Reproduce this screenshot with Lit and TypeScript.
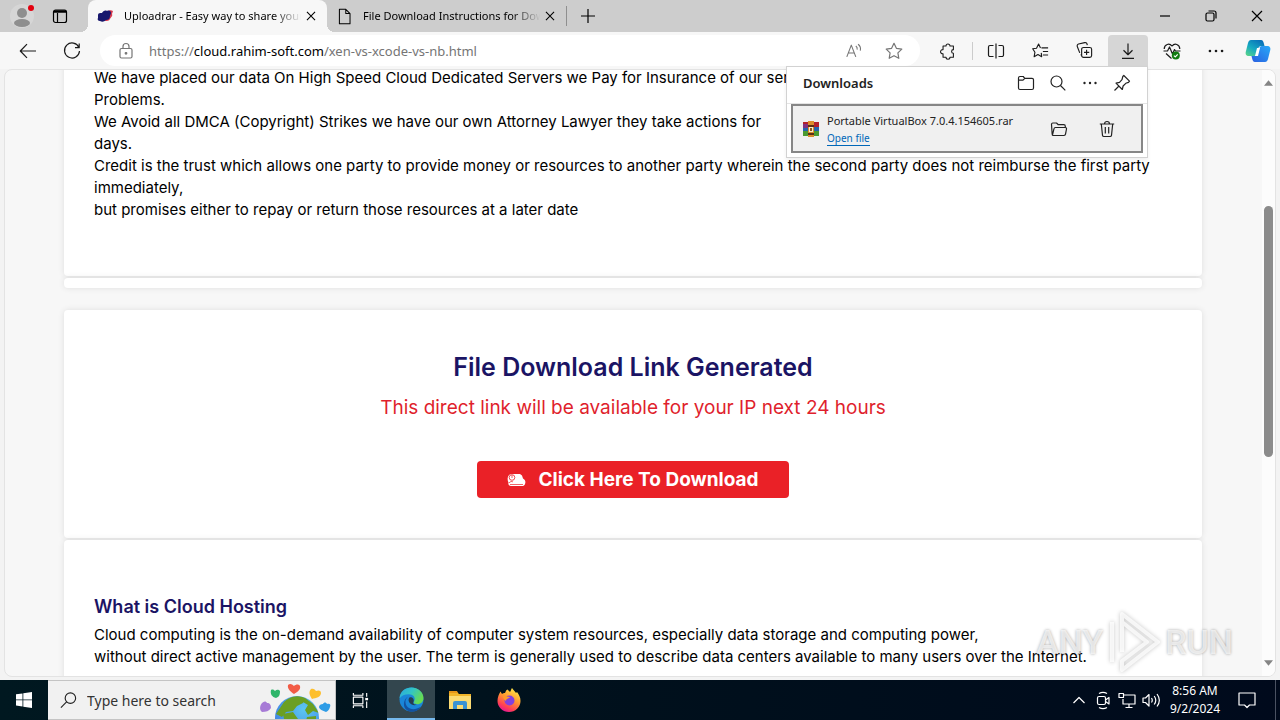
import { LitElement, html, css, svg } from "lit";
import { customElement } from "lit/decorators.js";
import { classMap } from "lit/directives/class-map.js";

/* Line icons, drawn on a 20 x 20 grid. */
const glyphs: Record<string, unknown> = {
  workspace: svg`<rect x="3.5" y="4" width="13" height="12.5" rx="2"/><path d="M4 5.500h12" stroke-width="2.500"/><path d="M7.5 7v9"/>`,
  page: svg`<path d="M4 1.500h7.500l5 5v12H4z M11.500 1.500v5h5"/>`,
  close: svg`<path d="M5.500 5.500l9 9M14.500 5.500l-9 9"/>`,
  plus: svg`<path d="M10 3v14M3 10h14"/>`,
  minimize: svg`<path d="M5 10h10"/>`,
  restore: svg`<rect x="5" y="7" width="8" height="8" rx="1.500"/><path d="M7.500 5h5.500a2 2 0 0 1 2 2v5.500"/>`,
  exit: svg`<path d="M5 5l10 10M15 5L5 15"/>`,
  back: svg`<path d="M18 10H2.500M9 3.200L2.300 10 9 16.800"/>`,
  reload: svg`<path d="M16.900 6.500A7.500 7.500 0 1 0 17.500 10M17.200 2.500v4.200h-4.200"/>`,
  lock: svg`<rect x="4" y="7.500" width="12" height="9.500" rx="1.500"/><path d="M7 7.500V5.500a3 3 0 0 1 6 0v2"/><circle cx="10" cy="12.300" r=".8" fill="currentColor"/>`,
  read: svg`<path d="M2 16.500L7 3.500l5 13M3.800 12.200h6.400M12 4.500c1.500 1 1.800 2.500 1.500 4M14.500 2.500c2.500 1.800 3.200 4 2.500 7"/>`,
  star: svg`<path d="M10 2.300l2.400 5 5.400.8-3.900 3.800.9 5.400-4.800-2.600-4.800 2.600.9-5.400L2.200 8.100l5.400-.8z"/>`,
  puzzle: svg`<path d="M4.500 4.500h3.300a2.200 2.200 0 1 1 4.400 0H16v4a2 2 0 1 0 0 4V17h-3.800a2.200 2.200 0 0 1-4.400 0H4.500v-4a2.300 2.300 0 1 1 0-4.500z"/>`,
  split: svg`<path d="M7.500 4.500H4a1.500 1.500 0 0 0-1.500 1.500v8A1.500 1.500 0 0 0 4 15.500h3.500M12.500 4.500H16A1.500 1.500 0 0 1 17.500 6v8a1.500 1.500 0 0 1-1.500 1.500h-3.500M10 2.500v15"/>`,
  favorites: svg`<path d="M11 7.300h7M12.500 11h5.500M12.500 14.700h5.500M10.800 12.500l.4 4-3.900-2.200-4 2.300.8-4.700L1.800 8.200l4-.6L8 3.200l2 4.100"/>`,
  collections: svg`<rect x="7" y="6.800" width="10.500" height="10.500" rx="2"/><path d="M12.200 9.300v5.500M9.500 12h5.500M5 12.500L2.400 5.800a2 2 0 0 1 1.300-2.600l6.500-1.500a2 2 0 0 1 2.400 1.500l.4 1.200M7 15l-1-.8"/>`,
  download: svg`<path d="M10 2.500v11M5.500 9.300l4.500 4.400 4.500-4.400M4 17.300h12"/>`,
  health: svg`<path d="M10 5.200C7.500 1.800 2.300 3 2.200 8M10 5.200C12.500 1.800 17.700 3 17.800 8M1.500 10h4l2-4 3 7 2-4.500 1 1.500h5M4 12.500l5.500 5"/><circle cx="13.800" cy="14.500" r="4" fill="#107c10" stroke="none"/><path d="M11.900 14.600l1.400 1.300 2.400-2.500" stroke="#fff"/>`,
  more: svg`<g fill="currentColor" stroke="none"><circle cx="4.500" cy="10" r="1.200"/><circle cx="10" cy="10" r="1.200"/><circle cx="15.500" cy="10" r="1.200"/></g>`,
  folder: svg`<path d="M2.500 5A1.500 1.500 0 0 1 4 3.500H7.200l1.600 1.800H16A1.500 1.500 0 0 1 17.500 6.800v8.200A1.500 1.500 0 0 1 16 16.500H4A1.500 1.500 0 0 1 2.500 15zM2.500 7.200h4.500l1.800-1.900"/>`,
  search: svg`<circle cx="8.500" cy="8.500" r="5.500"/><path d="M12.500 12.500l4.800 4.800"/>`,
  pin: svg`<path d="M11.800 2.500l5.700 5.700-1 1.200-2.700.9-2.700 2.700-.8 3.500L4 10.200l3.500-.9 2.500-2.600.8-3.200zM7 13l-4.500 4.500"/>`,
  openFolder: svg`<path d="M3.200 15.500L2.500 5.200A1.300 1.300 0 0 1 3.800 4H7.500l1.800 1.700h5.500a1.500 1.500 0 0 1 1.500 1.500V8.500M3.500 15.800L5 9.700A1.500 1.500 0 0 1 6.500 8.500h9.800A1.300 1.300 0 0 1 17.500 10l-1 5.200a1.500 1.500 0 0 1-1.500 1.300H4.200a1 1 0 0 1-1-.9"/>`,
  trash: svg`<path d="M2.800 5h14.400M7.500 5a2.500 2.500 0 0 1 5 0M4.300 5l1.200 11.300A1.500 1.500 0 0 0 7 17.500h6a1.500 1.500 0 0 0 1.500-1.200L15.700 5M8.300 8v6.500M11.700 8v6.500"/>`,
  find: svg`<circle cx="12" cy="7.500" r="5.500"/><path d="M8 11.500L2 17.500"/>`,
  taskview: svg`<path d="M2.500 2v2.500h10V2M2.500 18v-2.500h10V18M2.500 6.500h10v7h-10zM16.500 2v4M16.500 11v7"/><path d="M15 8.500h3" stroke-width="2.500"/>`,
  chevron: svg`<path d="M4.500 13L10 7.500l5.500 5.500"/>`,
  meet: svg`<rect x="4.500" y="6.500" width="8" height="8" rx="1.500"/><path d="M12.500 10l3.500-2.500v6.500l-3.500-2.500M6 3.500c2.500-1.500 5.500-1.500 8 0M6 17.500c2.500 1.500 5.500 1.500 8 0"/>`,
  network: svg`<path d="M7 5h11v9H6V9M12 14v3.500M8.500 17.500h7"/><rect x="2" y="3.500" width="4.500" height="4"/>`,
  sound: svg`<path d="M2 8v4.500h2.500L8 16V4.500L4.500 8zM10.500 8c1 1.500 1 3 0 4.500M13.200 6c2 2.700 2 5.800 0 8.500M16 4c3 4 3 8.500 0 12.500"/>`,
  notice: svg`<path d="M2 3h16v12h-5.500L10 17.500 7.500 15H2z"/>`,
};

const icon = (name: string, size = 20) => html`<svg class="icon" width=${size} height=${size} viewBox="0 0 20 20" aria-hidden="true">${glyphs[name]}</svg>`;

const shared = css`
  * { box-sizing: border-box; }
  button { font: inherit; color: inherit; background: none; border: 0; padding: 0; display: flex; align-items: center; justify-content: center; flex: none; }
  .icon { fill: none; stroke: currentColor; stroke-width: 1.2; display: block; flex: none; stroke-linejoin: round; }
  svg { display: block; flex: none; }
`;

@customElement("tab-strip")
class TabStrip extends LitElement {
  static styles = [shared, css`
    :host { display: flex; height: 32px; background: #cdcdcd; color: #000; }
    .profile { width: 44px; }
    .space { width: 32px; }
    .tabs { display: flex; margin-left: 12px; }
    .tab { display: flex; align-items: center; width: 239px; padding: 0 6px 0 9px; position: relative; }
    .tab.active { background: #f7f7f7; border-radius: 8px 8px 0 0; }
    .tab.active::before, .tab.active::after { content: ""; position: absolute; bottom: 0; width: 8px; height: 8px; }
    .tab.active::before { left: -8px; background: radial-gradient(circle at 0 0, #cdcdcd 8px, #f7f7f7 8px); }
    .tab.active::after { right: -8px; background: radial-gradient(circle at 100% 0, #cdcdcd 8px, #f7f7f7 8px); }
    .title { flex: 1; min-width: 0; margin-left: 10px; overflow: hidden; white-space: nowrap; font-size: 11px; line-height: 20px;
      -webkit-mask-image: linear-gradient(to right, #000 84%, transparent); mask-image: linear-gradient(to right, #000 84%, transparent); }
    .x { width: 20px; height: 20px; }
    .bar { width: 1px; height: 20px; background: #8f8f8f; align-self: center; }
    .add { width: 42px; }
    .controls { display: flex; margin-left: auto; }
    .controls button { width: 46px; }
  `];
  render() {
    return html`
      <button class="profile" aria-label="Profile"><svg width="28" height="28" viewBox="0 0 28 28">
        <circle cx="14" cy="14" r="12" fill="#d6d6d6"/><circle cx="14" cy="11" r="5" fill="#8e8e8e"/><ellipse cx="14" cy="21" rx="8" ry="4" fill="#8e8e8e"/>
        <circle cx="23" cy="6" r="3" fill="#e3000f"/></svg></button>
      <button class="space" aria-label="Workspaces">${icon("workspace", 20)}</button>
      <div class="tabs">
        ${[["Uploadrar - Easy way to share your files", true], ["File Download Instructions for Download", false]].map(([title, active]) => html`
          <div class=${classMap({ tab: true, active: !!active })}>
            ${active ? html`<svg width="17" height="16" viewBox="0 0 17 16"><path d="M10 4c2-2 4-2 6-1l-1 3c1 2-1 3-2 5-1 2-3 2-5 2z" fill="#d83a4e"/><path d="M1 7c0-2 2-2 4-2 1-2 3-3 5-2 2-1 4 0 4 2 0 1-1 2-1 3 0 3-2 4-4 4-2 2-4 2-6 1-2 0-3-2-2-3z" fill="#17176d"/></svg>` : icon("page", 17)}
            <span class="title">${title}</span>
            <button class="x" aria-label="Close tab">${icon("close", 18)}</button>
          </div>`)}
      </div>
      <span class="bar"></span>
      <button class="add" aria-label="New tab">${icon("plus", 20)}</button>
      <div class="controls">
        <button aria-label="Minimize">${icon("minimize")}</button>
        <button aria-label="Restore">${icon("restore")}</button>
        <button aria-label="Close">${icon("exit")}</button>
      </div>`;
  }
}

@customElement("downloads-panel")
class DownloadsPanel extends LitElement {
  static styles = [shared, css`
    :host { display: block; width: 362px; background: #fff; border: 1px solid #d2d2d2; padding-bottom: 4px; color: #222; box-shadow: 0 2px 4px #0001; }
    header { display: flex; align-items: center; height: 37px; padding: 0 9px 4px 16px; border-bottom: 1px solid #e4e4e4; }
    h2 { margin: 0 auto 0 0; font-size: 13px; font-weight: 600; }
    header button { width: 32px; height: 32px; }
    .item { display: flex; align-items: center; margin: 0 4px; height: 49px; border: 2px solid #868686; background: #f0f0f0; padding: 0 10px; }
    .info { flex: 1; margin-left: 8px; display: flex; flex-direction: column; align-items: flex-start; }
    .name { font-size: 11px; line-height: 20px; white-space: nowrap; }
    a { font-size: 10px; line-height: 14px; color: #0067b8; text-decoration: none; border-bottom: 1px solid #0067b8; }
    .item button { width: 48px; height: 40px; }
  `];
  render() {
    return html`
      <header><h2>Downloads</h2>
        <button aria-label="Open downloads folder">${icon("folder", 20)}</button>
        <button aria-label="Search downloads">${icon("search", 20)}</button>
        <button aria-label="More options">${icon("more", 20)}</button>
        <button aria-label="Pin downloads">${icon("pin", 20)}</button>
      </header>
      <div class="item">
        <svg width="16" height="16" viewBox="0 0 16 16"><path fill="#b3202c" d="M0 1h16v5H0z"/><path fill="#2463ac" d="M0 6h16v5H0z"/><path fill="#4b9a30" d="M0 10h16v5H0z"/><path fill="#82317e" d="M0 3h5v4H0z"/><path fill="#dc8d2c" d="M5 0h6v16H5z"/><path fill="#5c2f14" d="M5 4h6v2H5zM5 12h6v2H5z"/><path fill="#f8edc9" d="M6 6h4v5H6z"/><path fill="#915a1b" d="M7 7h2v3H7z"/></svg>
        <div class="info"><span class="name">Portable VirtualBox 7.0.4.154605.rar</span><a href="#open">Open file</a></div>
        <button aria-label="Show in folder">${icon("openFolder", 20)}</button>
        <button aria-label="Delete file">${icon("trash", 20)}</button>
      </div>`;
  }
}

@customElement("tool-bar")
class ToolBar extends LitElement {
  static styles = [shared, css`
    :host { display: flex; align-items: center; height: 37px; padding: 0 2px 0 6px; background: #f7f7f7; color: #1b1b1b; }
    button { width: 40px; height: 31px; margin: 0 2px; border-radius: 4px 4px 0 0; }
    .address { flex: 1; min-width: 0; height: 31px; margin: 0 6px; padding: 0 6px 0 16px; border-radius: 16px; background: #fff; display: flex; align-items: center; color: #757575; }
    .url { flex: 1; min-width: 0; margin-left: 13px; font-size: 13px; line-height: 20px; white-space: nowrap; overflow: hidden; }
    .url b { font-weight: 400; color: #000; }
    .address button { width: 36px; }
    .bar { width: 1px; height: 18px; margin: 0 1px 0 2px; background: #ccc; }
    .anchor { position: relative; z-index: 2; }
    .anchor > button { background: #d6d6d6; }
    .copilot { width: 36px; }
    downloads-panel { position: absolute; top: 100%; right: 2px; }
  `];
  render() {
    return html`
      <button aria-label="Back">${icon("back", 20)}</button>
      <button aria-label="Reload">${icon("reload", 20)}</button>
      <div class="address">${icon("lock", 20)}
        <span class="url">https://<b>cloud.rahim-soft.com</b>/xen-vs-xcode-vs-nb.html</span>
        <button aria-label="Read aloud">${icon("read", 18)}</button>
        <button aria-label="Add to favorites">${icon("star", 20)}</button>
      </div>
      <button aria-label="Extensions">${icon("puzzle", 18)}</button>
      <span class="bar"></span>
      <button aria-label="Split screen">${icon("split", 20)}</button>
      <button aria-label="Favorites">${icon("favorites", 19)}</button>
      <button aria-label="Collections">${icon("collections", 19)}</button>
      <div class="anchor"><button aria-label="Downloads">${icon("download", 20)}</button><downloads-panel></downloads-panel></div>
      <button aria-label="Browser essentials">${icon("health", 20)}</button>
      <button aria-label="Settings and more">${icon("more", 22)}</button>
      <button class="copilot" aria-label="Copilot"><svg width="26" height="24" viewBox="0 0 26 24">
        <defs><linearGradient id="a" x1="0" y1="1" x2=".7" y2="0"><stop offset="0" stop-color="#5fd884"/><stop offset=".5" stop-color="#16a9c2"/><stop offset="1" stop-color="#0972b9"/></linearGradient>
        <linearGradient id="b" x1="0" y1="1" x2="1" y2="0"><stop offset="0" stop-color="#2a5fe0"/><stop offset="1" stop-color="#28a9f8"/></linearGradient></defs>
        <path d="M6 1h10c2 0 2.500 2 3 4l.5 2h-3c-2 0-3 1-3.500 3l-1.500 5c-.5 1.500-1.500 2-3 2H4c-3 0-4-2-3-5l2-8c.5-2 1.500-3 3-3z" fill="url(#a)"/>
        <path d="M20 23H10c-2 0-2.500-2-3-4l-.5-2h3c2 0 3-1 3.500-3l1.500-5c.5-1.500 1.500-2 3-2H22c3 0 4 2 3 5l-2 8c-.5 2-1.500 3-3 3z" fill="url(#b)"/>
        <path d="M12 9h3l-2 8h-3z" fill="#fff"/>
      </svg></button>`;
  }
}

@customElement("web-page")
class WebPage extends LitElement {
  static styles = [shared, css`
    :host { display: flex; min-height: 0; margin: 0 4px 3px; border: 1px solid #e3e3e3; border-radius: 8px; background: #f7f7f7; overflow: hidden; font-family: Inter, "Noto Sans", sans-serif; }
    .scroller { flex: 1; min-width: 0; overflow: hidden; padding: 0 60px 0 59px; }
    .card { background: #fff; border-radius: 4px; box-shadow: 0 0 6px #0000001a; margin-bottom: 2px; padding: 55px 30px; font-size: 15px; line-height: 22px; color: #000; }
    .card.lead { padding-top: 20px; }
    .card.strip { padding: 5px; margin-bottom: 22px; }
    .card.link { padding: 41px 30px 40px; display: flex; flex-direction: column; align-items: center; }
    p { margin: 0; white-space: nowrap; }
    h1 { margin: 0 0 10px; font-size: 25px; line-height: 32px; font-weight: 600; color: #1b1464; }
    h2 { margin: 0 0 5px; font-size: 18px; line-height: 24px; font-weight: 600; color: #1b1464; }
    .note { font-size: 19px; line-height: 30px; margin-bottom: 38px; color: #df1f2d; }
    .go { height: 37px; padding: 0 30px; gap: 12px; border-radius: 4px; background: #ea2127; color: #fff; font-size: 19px; font-weight: 700; }
    .bar { width: 13px; flex: none; display: flex; flex-direction: column; align-items: center; background: #fcfcfc; padding: 10px 0; }
    .thumb { width: 9px; height: 251px; border-radius: 5px; background: #8b8b8b; margin: 120px 0 auto; }
  `];
  firstUpdated() {
    this.renderRoot.querySelector(".scroller")!.scrollTop = 23;
  }
  render() {
    const lead = [
      "We have placed our data On High Speed Cloud Dedicated Servers we Pay for Insurance of our servers",
      "Problems.",
      "We Avoid all DMCA (Copyright) Strikes we have our own Attorney Lawyer they take actions for",
      "days.",
      "Credit is the trust which allows one party to provide money or resources to another party wherein the second party does not reimburse the first party",
      "immediately,",
      "but promises either to repay or return those resources at a later date",
    ];
    return html`
      <main class="scroller">
        <section class="card lead">${lead.map((line) => html`<p>${line}</p>`)}</section>
        <div class="card strip"></div>
        <section class="card link">
          <h1>File Download Link Generated</h1>
          <p class="note">This direct link will be available for your IP next 24 hours</p>
          <button class="go"><svg width="19" height="14" viewBox="0 0 19 14"><path d="M5 1h8l2 1.500 1 3c2 1 3 3 2 5.500-.5 1.500-1.500 2-3 2H4c-2 0-3-1.500-2.500-3.500C0 7 0 1 5 1z" fill="#fff"/><circle cx="5" cy="4.500" r="2.800" fill="none" stroke="#ea2127" stroke-width=".8"/><path d="M5 2v3M2 10c1-1.500 3-2 4-1M3 11.500h13" fill="none" stroke="#ea2127" stroke-width=".7"/></svg>Click Here To Download</button>
        </section>
        <section class="card">
          <h2>What is Cloud Hosting</h2>
          <p>Cloud computing is the on-demand availability of computer system resources, especially data storage and computing power,</p>
          <p>without direct active management by the user. The term is generally used to describe data centers available to many users over the Internet.</p>
        </section>
      </main>
      <div class="bar">
        <svg width="9" height="6" viewBox="0 0 10 6"><path d="M0 6L5 0l5 6z" fill="#858585"/></svg>
        <span class="thumb"></span>
        <svg width="9" height="6" viewBox="0 0 10 6"><path d="M0 0l5 6 5-6z" fill="#858585"/></svg>
      </div>`;
  }
}

@customElement("task-bar")
class TaskBar extends LitElement {
  static styles = [shared, css`
    :host { display: flex; height: 40px; background: linear-gradient(90deg, #001820, #00101c 50%, #000a1c); color: #fff; }
    button { height: 40px; width: 48px; }
    .search { display: flex; width: 288px; height: 40px; background: #f1f1f1; border: 1px solid #c4c4c4; border-left-width: 0; color: #222; align-items: center; padding-left: 11px; }
    input { flex: 1; min-width: 0; margin-left: 9px; border: 0; padding: 0; background: none; font: inherit; font-size: 14px; outline: 0; }
    input::placeholder { color: #333; opacity: 1; }
    .art { align-self: flex-end; }
    .apps { display: flex; gap: 1px; margin-left: 3px; }
    .apps .on { background: #33464e; border-bottom: 2px solid #76b9ed; }
    .tray { display: flex; align-items: center; margin-left: auto; }
    .tray button { width: 24px; }
    .clock { width: 64px; text-align: center; font-size: 12px; line-height: 18px; }
    .tray .notice { width: 40px; }
    .desk { width: 5px; align-self: stretch; border-left: 1px solid #4a5262; margin-left: 8px; }
  `];
  render() {
    return html`
      <button aria-label="Start"><svg width="16" height="16" viewBox="0 0 16 16"><path fill="#fff" d="M0 2.300L6.500 1.400v6.100H0zM7.300 1.300L16 0v7.500H7.300zM0 8.300h6.500v6.200L0 13.600zM7.300 8.300H16V16l-8.700-1.300z"/></svg></button>
      <label class="search">${icon("find", 19)}<input type="text" placeholder="Type here to search" aria-label="Type here to search">
        <svg class="art" width="76" height="38" viewBox="0 0 76 38">
          <defs><radialGradient id="g" cx=".65" cy=".3" r=".8"><stop offset="0" stop-color="#5cc6f2"/><stop offset="1" stop-color="#3d7be0"/></radialGradient><clipPath id="c"><circle cx="38" cy="37" r="22"/></clipPath></defs>
          <circle cx="38" cy="37" r="22" fill="url(#g)"/>
          <g clip-path="url(#c)" fill="#6b9f22"><path d="M25 21c6-6 14-7 21-4l-2 5-6 3-4 5-7 1-4 5-6-3zM46 17l8 6 6 9-6-2-5 4-3-5 3-5-5-3zM24 33l10-2 5 7H25zM48 36l9-1v5H47z"/></g>
          <path d="M29 4c2-2 4-1 6 1 2-2 5-2 6 0 1 4-3 6-6 8-3-2-7-5-6-9z" fill="#f25b45"/>
          <path d="M12 9c2-1 3 0 4 1 2-2 4-1 5 0 0 4-1 6-4 7-4-1-6-4-5-8z" fill="#2fb56a"/>
          <path d="M52 8c3-1 4 1 5 2 2-1 5-1 5 2 0 4-5 5-9 6-2-3-4-7-1-10z" fill="#fdbf2d"/>
          <path d="M3 22c2-2 4-2 5 0 3 0 4 2 4 5-2 3-5 4-9 4-3-2-2-7 0-9z" fill="#a77bd6"/>
          <path d="M64 23c1-2 3-2 4 0 3-1 4 1 3 3-1 3-2 4-4 5-3-1-7-3-7-5s2-3 4-3z" fill="#2e9ce6"/>
        </svg>
      </label>
      <button aria-label="Task view">${icon("taskview", 19)}</button>
      <div class="apps">
        <button class="on" aria-label="Microsoft Edge"><svg width="25" height="25" viewBox="0 0 24 24">
          <defs><linearGradient id="e" x1="0" y1="0" x2="1" y2=".5"><stop offset="0" stop-color="#2ba8e0"/><stop offset=".5" stop-color="#32c5c5"/><stop offset="1" stop-color="#68db50"/></linearGradient></defs>
          <circle cx="12" cy="12" r="11.500" fill="#1a86d8"/>
          <path d="M.5 11C1 4 6 .5 12 .5S23.500 5 23.500 10.500c0 4-3 6-6 6-2.500 0-4-1-3-2.500 2-4-1-7-5-7-4 0-7.500 1.500-9 4z" fill="url(#e)"/>
          <path d="M9 9c-3 2-4 6-1 10 3 3 8 3 13 0-3 5-9 6-13 3.500C3 20 4 11 9 9z" fill="#1352a0"/>
          <path d="M10 10c2-1 5 1 4 4-1 2 0 3 3 3-4 2-10-3-7-7z" fill="#263d51"/></svg></button>
        <button aria-label="File Explorer"><svg width="22" height="20" viewBox="0 0 22 20"><path d="M0 2h8l2 2h12v15H0z" fill="#f0b429"/><path d="M0 1h8l1 2H0z" fill="#e59518"/><path d="M0 6h22v13H0z" fill="#fbdb73"/><path d="M4 19v-6a2 2 0 0 1 2-2h10a2 2 0 0 1 2 2v6h-4v-4H8v4z" fill="#3b93d4"/></svg></button>
        <button aria-label="Firefox"><svg width="24" height="24" viewBox="0 0 24 24">
          <defs><linearGradient id="f" x1=".8" y1="0" x2=".3" y2="1"><stop offset="0" stop-color="#fff14a"/><stop offset=".45" stop-color="#ff9830"/><stop offset=".8" stop-color="#ff3d55"/><stop offset="1" stop-color="#e3159a"/></linearGradient></defs>
          <path d="M15 0c1 2 3 3 4 5l1-1c2 3 3.500 5 3.500 9A11.500 11 0 0 1 .5 13C.5 9 2 6 3.500 3.500L5 6c1-1 2-1 3-1 1-2 1-3 2.500-3.500L13 4c1-1 1-3 2-4z" fill="url(#f)"/>
          <circle cx="12.500" cy="12.500" r="5" fill="#8240df"/><path d="M6 8c3-1 4 1 7 1-1 2-4 1-4 4-2-1-3-3-3-5z" fill="#ff9a29"/></svg></button>
      </div>
      <div class="tray">
        <button aria-label="Show hidden icons">${icon("chevron", 20)}</button>
        <button aria-label="Meet now">${icon("meet", 20)}</button>
        <button aria-label="Network">${icon("network", 20)}</button>
        <button aria-label="Volume">${icon("sound", 20)}</button>
        <div class="clock"><div>8:56 AM</div><div>9/2/2024</div></div>
        <button class="notice" aria-label="Notifications">${icon("notice", 20)}</button>
        <span class="desk"></span>
      </div>`;
  }
}

@customElement("app-root")
class AppRoot extends LitElement {
  static styles = css`
    :host { display: flex; flex-direction: column; height: 100vh; overflow: hidden; background: #f3f3f3; font-family: "Noto Sans", "Open Sans", sans-serif; position: relative; }
    tab-strip, tool-bar, task-bar { flex: none; }
    web-page { flex: 1; }
    .mark { position: absolute; right: 47px; bottom: 46px; display: flex; align-items: center; gap: 3px; pointer-events: none;
      font: 500 34px/64px Roboto, sans-serif; color: #ffffffb0; text-shadow: 0 0 3px #00000059; }
    .mark svg { display: block; filter: drop-shadow(0 0 2px #0000004d); }
  `;
  render() {
    return html`
      <tab-strip></tab-strip>
      <tool-bar></tool-bar>
      <web-page></web-page>
      <task-bar></task-bar>
      <div class="mark"><span>ANY</span>
        <svg width="56" height="64" viewBox="0 0 56 64" fill="none" stroke="#ffffffc0" stroke-width="4" stroke-linejoin="round"><path d="M16 10v32M16 4l36 28-36 28v-9l25-19L16 12zM6 12v40"/></svg>
        <span>RUN</span></div>`;
  }
}
